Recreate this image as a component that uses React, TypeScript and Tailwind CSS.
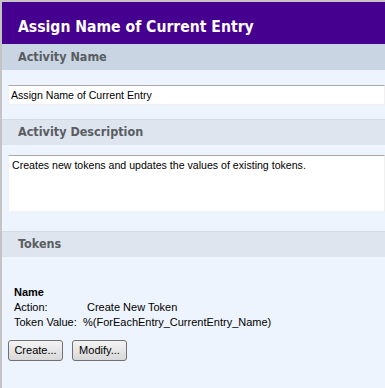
import { useState } from 'react';

const bodyFont = { fontFamily: '"Liberation Sans", Arial, sans-serif' };
const headFont = { fontFamily: '"DejaVu Sans Condensed", "DejaVu Sans", Verdana, sans-serif' };

function SectionHeader({ title, active }: { title: string; active?: boolean }) {
  return (
    <div
      className={`h-[26px] shrink-0 flex items-center pl-[16px] text-[12.5px] font-bold text-[#595d62] ${
        active ? 'bg-[#c9d5e3]' : 'bg-[#dee5ee] border-t border-[#d5dce6]'
      }`}
      style={headFont}
    >
      {title}
    </div>
  );
}

export default function App() {
  const [name, setName] = useState('Assign Name of Current Entry');
  const [description, setDescription] = useState(
    'Creates new tokens and updates the values of existing tokens.'
  );

  return (
    <div className="w-[385px] h-[388px] overflow-hidden bg-[#c4c4c4] pt-[2px] pl-[2px]">
      <div className="h-full bg-[#eef4fd] flex flex-col">
        <div
          className="h-[42px] shrink-0 bg-[#46008f] flex items-center pt-[9px] pl-[16px] text-white text-[15.6px] font-bold"
          style={headFont}
        >
          Assign Name of Current Entry
        </div>

        <SectionHeader title="Activity Name" active />
        <div className="h-[49px] shrink-0 pt-[11px] pl-[6px]">
          <input
            value={name}
            onChange={(e) => setName(e.target.value)}
            className="w-full h-[20px] bg-white border border-[#f0f0f0] border-t-[#a9a9a9] pl-[2px] text-[10.6px] text-black outline-none"
            style={bodyFont}
          />
        </div>

        <SectionHeader title="Activity Description" />
        <div className="h-[86px] shrink-0 pt-[10px] pl-[6px]">
          <textarea
            value={description}
            onChange={(e) => setDescription(e.target.value)}
            className="block w-full h-[57px] resize-none bg-white border border-[#f0f0f0] border-t-[#a9a9a9] px-[3px] pt-[2px] text-[10.6px] leading-[14px] text-black outline-none"
            style={bodyFont}
          />
        </div>

        <SectionHeader title="Tokens" />
        <div className="pt-[28px] pl-[12px] text-[11px] text-black" style={bodyFont}>
          <div className="font-bold leading-[15px]">Name</div>
          <div className="flex leading-[15px]">
            <span className="w-[73px]">Action:</span>
            <span>Create New Token</span>
          </div>
          <div className="flex leading-[15px]">
            <span className="w-[69px]">Token Value:</span>
            <span>%(ForEachEntry_CurrentEntry_Name)</span>
          </div>
          <div className="flex gap-[9px] mt-[10px] -ml-[6px]">
            <button className="w-[55px] h-[21px] rounded-[3px] border border-[#707070] bg-gradient-to-b from-[#f4f4f4] to-[#d8d8d8] text-[11px]">
              Create...
            </button>
            <button className="w-[55px] h-[21px] rounded-[3px] border border-[#707070] bg-gradient-to-b from-[#f4f4f4] to-[#d8d8d8] text-[11px]">
              Modify...
            </button>
          </div>
        </div>
      </div>
    </div>
  );
}
